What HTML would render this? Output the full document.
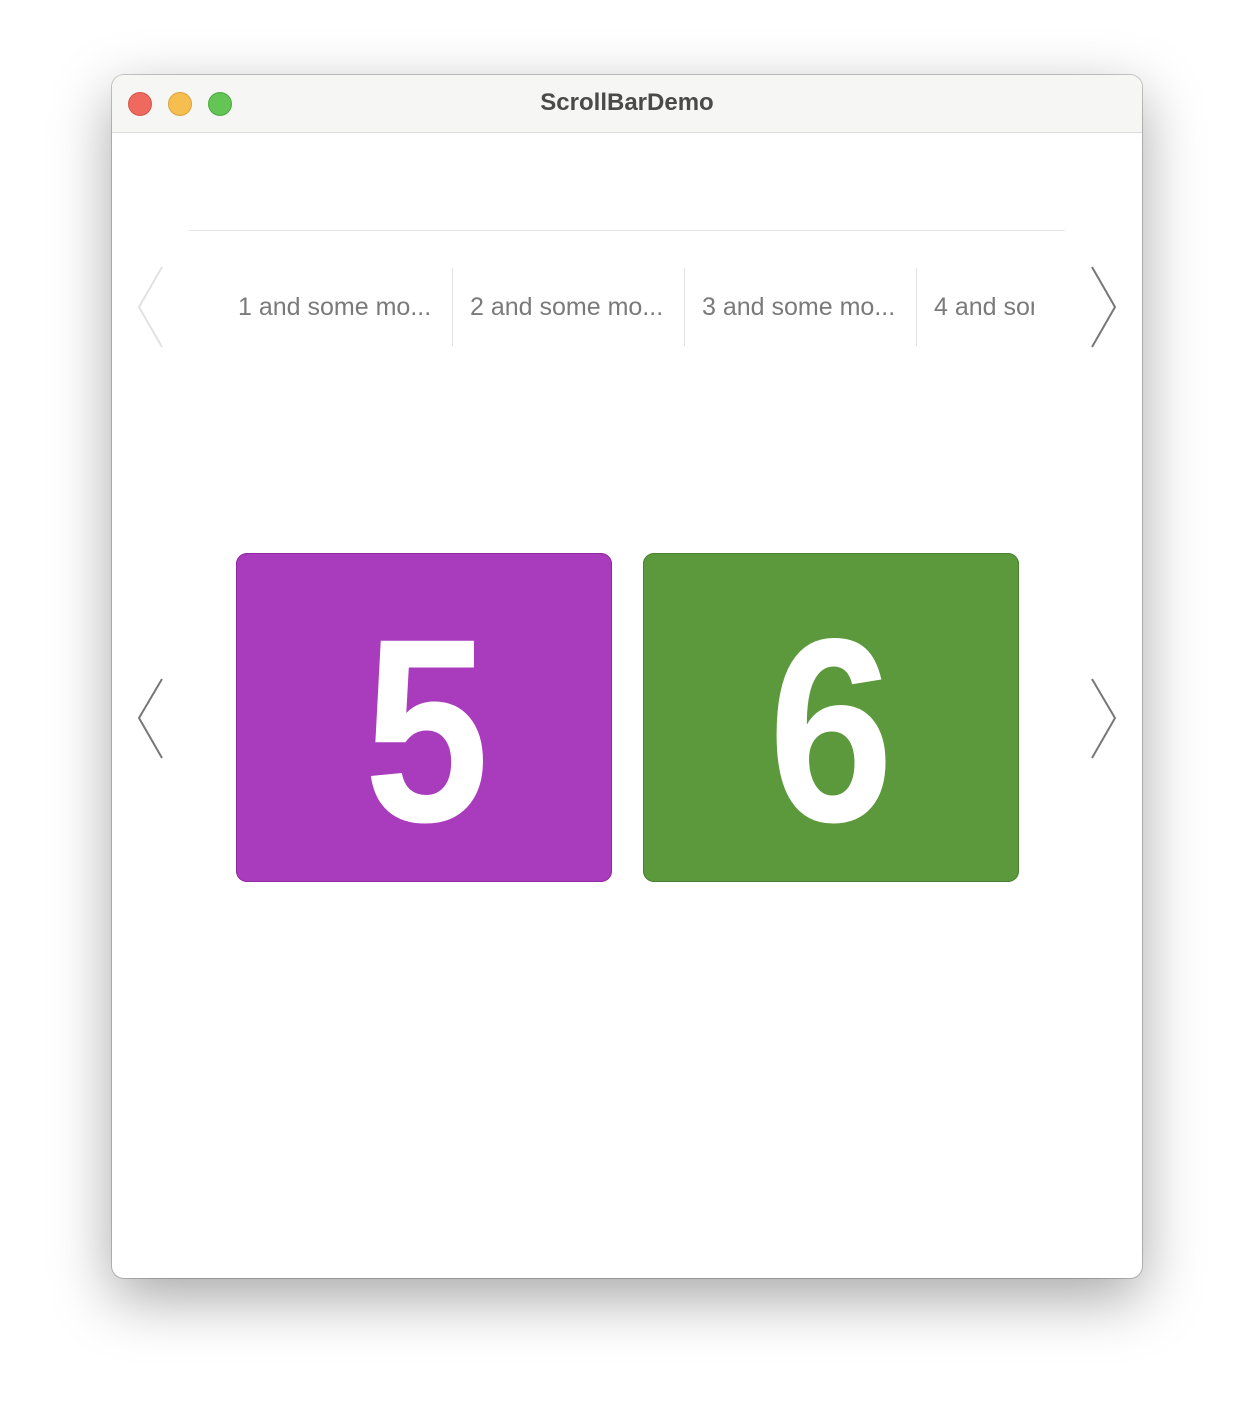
<!DOCTYPE html>
<html><head><meta charset="utf-8"><style>
body{margin:0;width:1254px;height:1426px;background:#fff;position:relative;overflow:hidden;font-family:"Liberation Sans",sans-serif}
.win{position:absolute;left:112px;top:75px;width:1030px;height:1203px;border-radius:12px;background:#fff;box-shadow:0 20px 60px rgba(0,0,0,.35),0 0 0 1px rgba(0,0,0,.2);overflow:hidden}
.tb{position:absolute;left:0;top:0;width:100%;height:57px;background:#f6f6f4;border-bottom:1px solid #dcdcdc}
.dot{position:absolute;top:17px;width:24px;height:24px;border-radius:50%}
.title{position:absolute;left:0;right:0;top:14px;text-align:center;font-weight:bold;font-size:24px;color:#4a4a4a}
.a{position:absolute}
.tab{position:absolute;top:217px;font-size:25px;color:#7a7a7a;line-height:30px;white-space:nowrap;overflow:hidden}
.sep{position:absolute;top:193px;width:1px;height:78px;background:#e4e4e4}
.box{position:absolute;top:478px;width:376px;height:329px;border-radius:11px;color:#fff;font-weight:bold;font-size:262px;line-height:262px;text-align:center}
.d{position:absolute;left:0;right:0;top:47px;transform:scaleX(.86)}
</style></head><body>
<div class="win">
<div class="tb">
<div class="dot" style="left:16px;background:#ee6a5e;border:1px solid #d5554a;width:22px;height:22px"></div>
<div class="dot" style="left:56px;background:#f5be4f;border:1px solid #d9a23b;width:22px;height:22px"></div>
<div class="dot" style="left:96px;background:#62c554;border:1px solid #4ea840;width:22px;height:22px"></div>
<div class="title">ScrollBarDemo</div>
</div>
<div class="a" style="left:77px;top:155px;width:876px;height:1px;background:#e4e4e4"></div>
<svg class="a" style="left:0;top:0" width="1030" height="1203">
<polyline points="50,192 27,232 50,272" fill="none" stroke="#e2e2e2" stroke-width="2"/>
<polyline points="980,192 1003,232 980,272" fill="none" stroke="#777" stroke-width="2"/>
<polyline points="50,604 27,643 50,683" fill="none" stroke="#777" stroke-width="2"/>
<polyline points="980,604 1003,643 980,683" fill="none" stroke="#777" stroke-width="2"/>
</svg>
<div class="tab" style="left:126px">1 and some mo...</div>
<div class="sep" style="left:340px"></div>
<div class="tab" style="left:358px">2 and some mo...</div>
<div class="sep" style="left:572px"></div>
<div class="tab" style="left:590px">3 and some mo...</div>
<div class="sep" style="left:804px"></div>
<div class="tab" style="left:822px;width:100px">4 and some mo...</div>
<div class="box" style="left:124px;background:#a93bbd;box-shadow:inset 0 0 0 1px #8f2aa2"><div class="d" style="padding-left:6px">5</div></div>
<div class="box" style="left:531px;background:#5b993c;box-shadow:inset 0 0 0 1px #4a8030"><div class="d">6</div></div>
</div>
</body></html>
